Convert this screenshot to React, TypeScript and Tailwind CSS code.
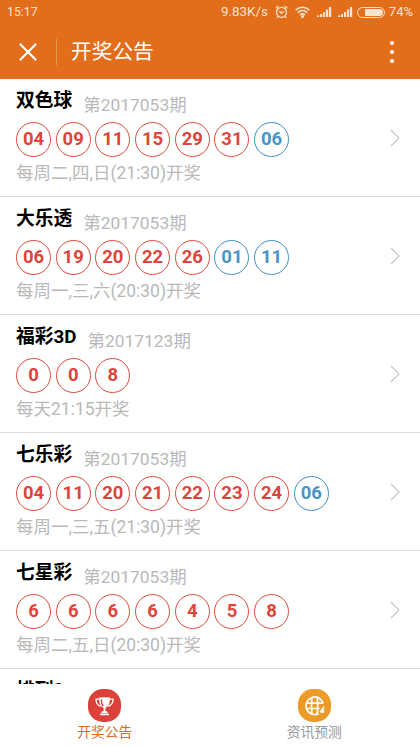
interface Lottery {
  name: string;
  issue: string;
  red: string[];
  blue: string[];
  schedule: string;
}

const lotteries: Lottery[] = [
  { name: '双色球', issue: '2017053', red: ['04', '09', '11', '15', '29', '31'], blue: ['06'], schedule: '每周二,四,日(21:30)开奖' },
  { name: '大乐透', issue: '2017053', red: ['06', '19', '20', '22', '26'], blue: ['01', '11'], schedule: '每周一,三,六(20:30)开奖' },
  { name: '福彩3D', issue: '2017123', red: ['0', '0', '8'], blue: [], schedule: '每天21:15开奖' },
  { name: '七乐彩', issue: '2017053', red: ['04', '11', '20', '21', '22', '23', '24'], blue: ['06'], schedule: '每周一,三,五(21:30)开奖' },
  { name: '七星彩', issue: '2017053', red: ['6', '6', '6', '6', '4', '5', '8'], blue: [], schedule: '每周二,五,日(20:30)开奖' },
];

function SignalIcon() {
  return (
    <svg width="15" height="10" viewBox="0 0 15 10" fill="#fbe3cf">
      <path d="M0 8.5h2.2V10H0zM3 7h2.2v3H3zM6 5h2.2v5H6zM9 2.5h2.2V10H9zM12 0h2.2v10H12z" />
    </svg>
  );
}

function StatusBar() {
  return (
    <div className="flex h-6 items-center px-[7px] text-[12.3px] leading-6 text-[#fbe3cf]">
      <span>15:17</span>
      <span className="ml-auto text-[13.4px]">9.83K/s</span>
      <svg className="ml-[7px]" width="13" height="14" viewBox="0 0 13 14" fill="none" stroke="#fbe3cf" strokeWidth="1.3">
        <circle cx="6.5" cy="7.3" r="5" />
        <path d="M4.2 6.3l2.3 1.8 2.3-1.8M.8 3.2L3.3 1M12.2 3.2L9.7 1M3 11.4l-1.2 1.5M10 11.4l1.2 1.5" />
      </svg>
      <svg className="ml-[7px]" width="15" height="12" viewBox="0 0 15 12" fill="none" stroke="#fbe3cf" strokeWidth="1.6">
        <path d="M.6 4.2c4-3.9 9.8-3.9 13.8 0M2.8 6.6c2.8-2.6 6.6-2.6 9.4 0M5 8.9c1.6-1.4 3.4-1.4 5 0" />
        <circle cx="7.5" cy="10.5" r=".7" fill="#fbe3cf" />
      </svg>
      <span className="ml-[7px]"><SignalIcon /></span>
      <span className="ml-[6px]"><SignalIcon /></span>
      {/* Battery */}
      <div className="ml-[4px] flex h-[11px] w-[28px] justify-end rounded-full border border-[#fbe3cf] p-px">
        <div className="w-[18px] rounded-r-full bg-[#fbe3cf]" />
      </div>
      <span className="ml-[4px] text-[13px]">74%</span>
    </div>
  );
}

function TitleBar() {
  return (
    <div className="flex h-[55px] items-center pl-[19px] pr-[26px]">
      <svg width="18" height="18" viewBox="0 0 18 18" stroke="white" strokeWidth="2.2">
        <path d="M.8.8l16.4 16.4M17.2.8L.8 17.2" />
      </svg>
      <div className="ml-[19px] h-[26px] w-px bg-[#e79b4c]" />
      <h1 className="ml-[14px] text-[20.7px] leading-[28px] text-white">开奖公告</h1>
      <div className="ml-auto flex flex-col gap-[5px]">
        <i className="size-1 rounded-full bg-white" />
        <i className="size-1 rounded-full bg-white" />
        <i className="size-1 rounded-full bg-white" />
      </div>
    </div>
  );
}

function Ball({ value, blue }: { value: string; blue?: boolean }) {
  return (
    <span
      className={`flex size-[35px] items-center justify-center rounded-full border text-[18.5px] font-bold leading-none
        ${blue ? 'border-[#3f90c4] text-[#4a94c6]' : 'border-[#dc4a40] text-[#dc453c]'}`}
    >
      {value}
    </span>
  );
}

function LotteryRow({ item }: { item: Lottery }) {
  return (
    <li className="flex h-[118px] shrink-0 items-center border-b border-[#dcdcdc] pl-4 pr-5">
      <div className="flex h-full flex-1 flex-col">
        <div className="flex h-[43px] items-start pt-2">
          <h2 className="text-[18.8px] font-bold leading-[28px] text-black">{item.name}</h2>
          <span className="ml-[11px] mt-1 text-[17.4px] leading-[28px] text-[#b9b9b9]">第{item.issue}期</span>
        </div>
        <div className="flex gap-[4.7px]">
          {item.red.map((n, i) => <Ball key={i} value={n} />)}
          {item.blue.map((n, i) => <Ball key={i} value={n} blue />)}
        </div>
        <p className="mt-[3px] text-[17.5px] leading-[26px] text-[#b9b9b9]">{item.schedule}</p>
      </div>
      <svg width="10" height="18" viewBox="0 0 10 18" fill="none" stroke="#c4c7ca" strokeWidth="1.2">
        <path d="M1 1l8 8-8 8" />
      </svg>
    </li>
  );
}

function TrophyIcon() {
  return (
    <svg width="33" height="33" viewBox="0 0 33 33" fill="none" stroke="white">
      <path d="M11.5 8.8h10c.2 5-1.2 9-5 10.2-3.8-1.2-5.2-5.2-5-10.2z" fill="white" strokeWidth=".8" />
      <path d="M11.3 10.2H8c0 4 1.8 6.3 5 7.2M21.7 10.2H25c0 4-1.8 6.3-5 7.2" strokeWidth="1.3" />
      <path d="M13.3 10.3c0 3.2.6 5.3 2 6.9" stroke="#dc4139" strokeWidth="1.3" />
      <path d="M16.5 18v5" strokeWidth="1.8" />
      <path d="M14 22.3h5l.8 1.7h-6.6zM12 24.6h9v1.7h-9z" fill="white" stroke="none" />
    </svg>
  );
}

function GlobeIcon() {
  return (
    <svg width="33" height="33" viewBox="0 0 33 33" fill="none" stroke="white" strokeWidth="1.7">
      <path d="M25.2 14.2A8.8 8.8 0 1 0 20.5 24.7" />
      <path d="M8.5 14.2h16.7M8.2 19.5h13.5M13.9 8.5c-.5 5.500-.5 11 0 16.500M19.300 8.500c.5 5.500.5 11 0 16.500" />
      <path d="M25.7 17.5v6.300l-4-.8z" fill="white" strokeWidth=".7" />
    </svg>
  );
}

function TabBar() {
  return (
    <nav className="grid h-[63px] shrink-0 grid-cols-2 bg-white pr-px text-[13.8px] leading-[20px]">
      <div className="flex flex-col items-center pt-[5px] text-[#dd6a22]">
        <span className="flex size-[33px] items-center justify-center rounded-[15px] bg-[#dc4139]"><TrophyIcon /></span>
        <span>开奖公告</span>
      </div>
      <div className="flex flex-col items-center pt-[5px] text-[#999]">
        <span className="flex size-[33px] items-center justify-center rounded-[15px] bg-[#ec9a28]"><GlobeIcon /></span>
        <span>资讯预测</span>
      </div>
    </nav>
  );
}

export default function App() {
  return (
    <div className="flex h-[747px] w-[420px] flex-col overflow-hidden bg-white font-[Roboto,'Noto_Sans_CJK_SC',sans-serif]">
      <header className="h-[79px] shrink-0 bg-[#e26d1b]">
        <StatusBar />
        <TitleBar />
      </header>
      <ul className="flex min-h-0 flex-1 flex-col overflow-hidden">
        {lotteries.map((item) => <LotteryRow key={item.name} item={item} />)}
        {/* Next row, cut off by the tab bar */}
        <li className="h-[118px] shrink-0 pl-4 pt-[7px]">
          <h2 className="text-[18.7px] font-bold leading-[28px] text-black">排列3</h2>
        </li>
      </ul>
      <TabBar />
    </div>
  );
}
